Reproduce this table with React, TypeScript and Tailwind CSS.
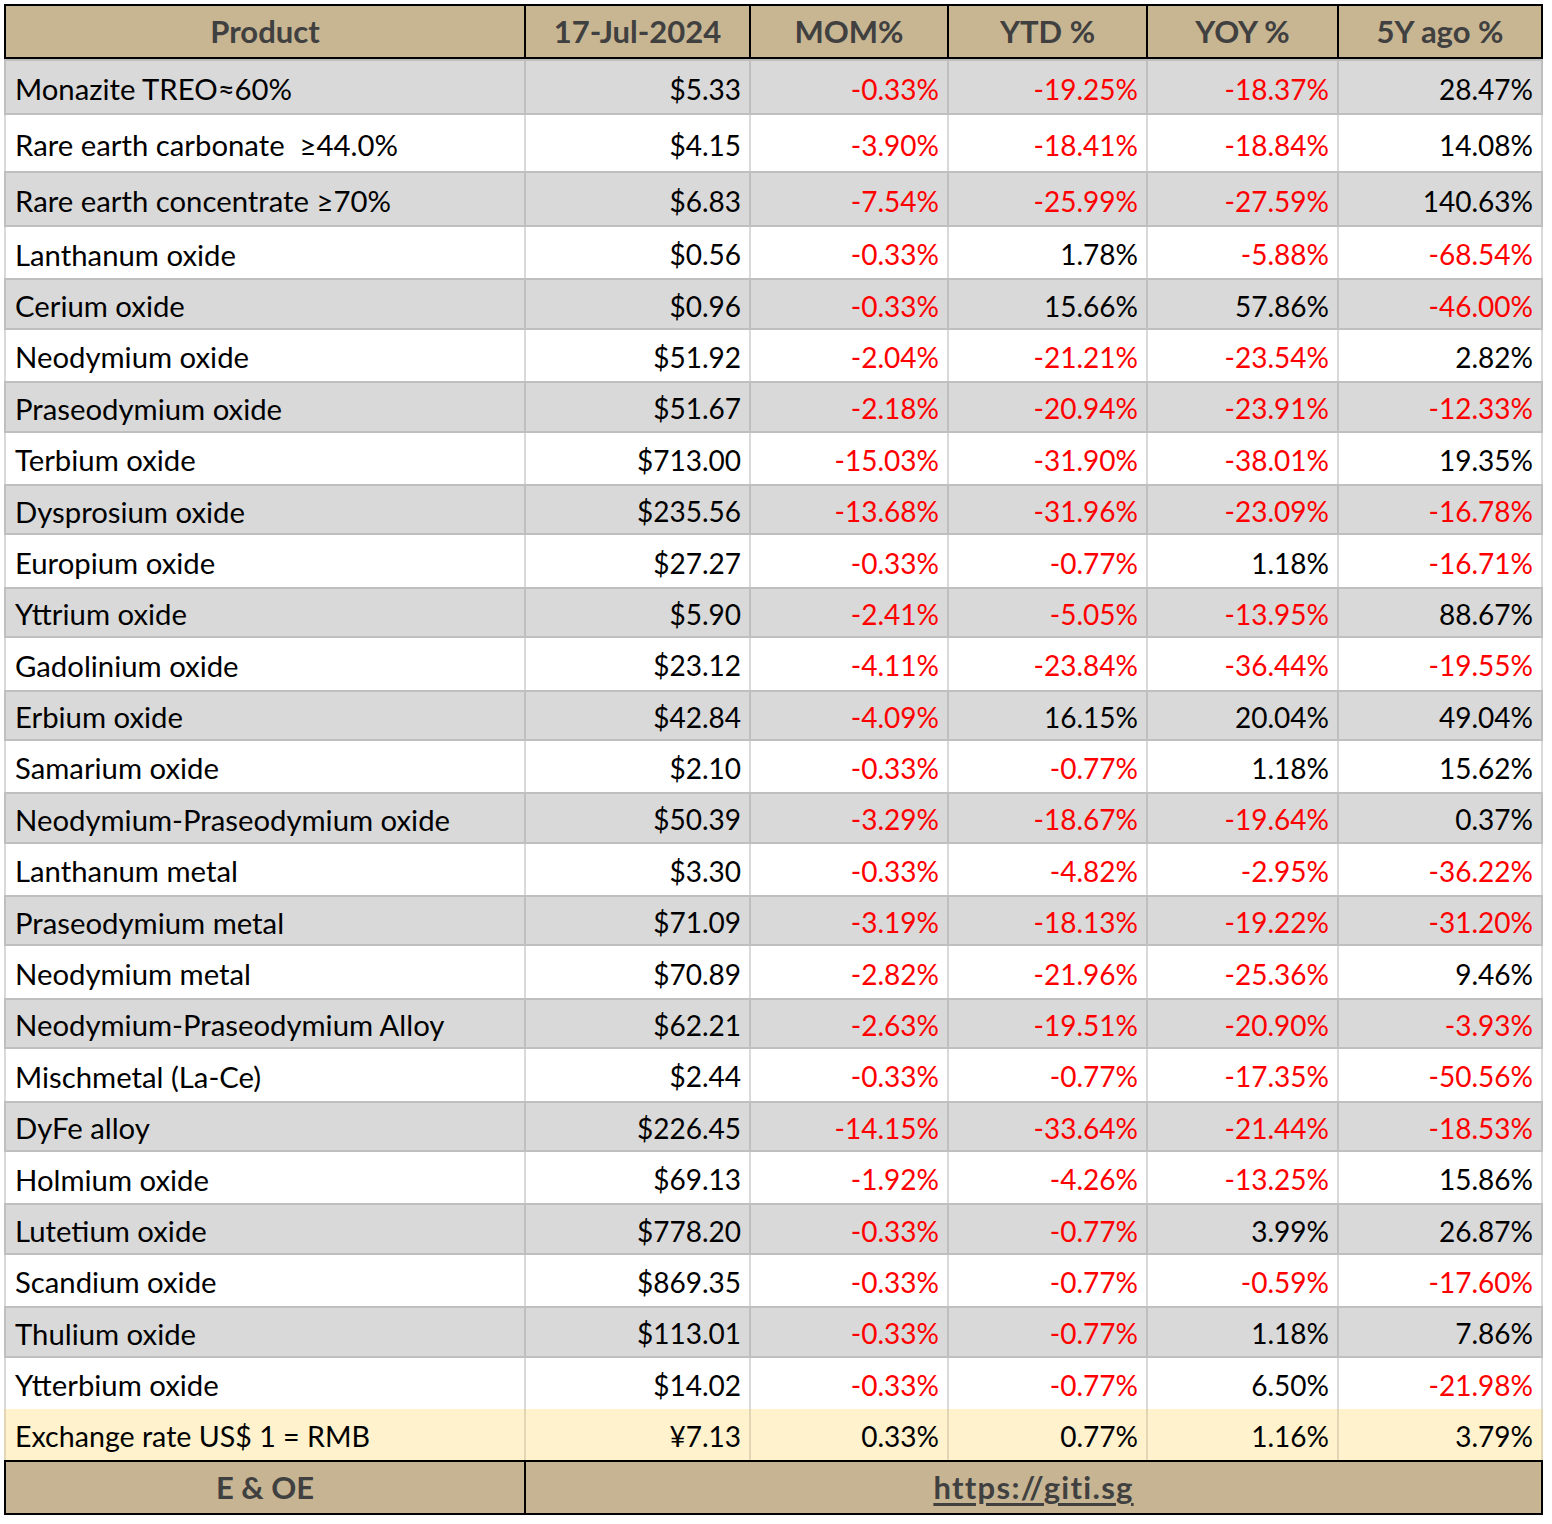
import React from "react";

type Row = [string, string, string, string, string, string];

const rows: Row[] = [
  ["Monazite TREO≈60%", "$5.33", "-0.33%", "-19.25%", "-18.37%", "28.47%"],
  ["Rare earth carbonate  ≥44.0%", "$4.15", "-3.90%", "-18.41%", "-18.84%", "14.08%"],
  ["Rare earth concentrate ≥70%", "$6.83", "-7.54%", "-25.99%", "-27.59%", "140.63%"],
  ["Lanthanum oxide", "$0.56", "-0.33%", "1.78%", "-5.88%", "-68.54%"],
  ["Cerium oxide", "$0.96", "-0.33%", "15.66%", "57.86%", "-46.00%"],
  ["Neodymium oxide", "$51.92", "-2.04%", "-21.21%", "-23.54%", "2.82%"],
  ["Praseodymium oxide", "$51.67", "-2.18%", "-20.94%", "-23.91%", "-12.33%"],
  ["Terbium oxide", "$713.00", "-15.03%", "-31.90%", "-38.01%", "19.35%"],
  ["Dysprosium oxide", "$235.56", "-13.68%", "-31.96%", "-23.09%", "-16.78%"],
  ["Europium oxide", "$27.27", "-0.33%", "-0.77%", "1.18%", "-16.71%"],
  ["Yttrium oxide", "$5.90", "-2.41%", "-5.05%", "-13.95%", "88.67%"],
  ["Gadolinium oxide", "$23.12", "-4.11%", "-23.84%", "-36.44%", "-19.55%"],
  ["Erbium oxide", "$42.84", "-4.09%", "16.15%", "20.04%", "49.04%"],
  ["Samarium oxide", "$2.10", "-0.33%", "-0.77%", "1.18%", "15.62%"],
  ["Neodymium-Praseodymium oxide", "$50.39", "-3.29%", "-18.67%", "-19.64%", "0.37%"],
  ["Lanthanum metal", "$3.30", "-0.33%", "-4.82%", "-2.95%", "-36.22%"],
  ["Praseodymium metal", "$71.09", "-3.19%", "-18.13%", "-19.22%", "-31.20%"],
  ["Neodymium metal", "$70.89", "-2.82%", "-21.96%", "-25.36%", "9.46%"],
  ["Neodymium-Praseodymium Alloy", "$62.21", "-2.63%", "-19.51%", "-20.90%", "-3.93%"],
  ["Mischmetal (La-Ce)", "$2.44", "-0.33%", "-0.77%", "-17.35%", "-50.56%"],
  ["DyFe alloy", "$226.45", "-14.15%", "-33.64%", "-21.44%", "-18.53%"],
  ["Holmium oxide", "$69.13", "-1.92%", "-4.26%", "-13.25%", "15.86%"],
  ["Lutetium oxide", "$778.20", "-0.33%", "-0.77%", "3.99%", "26.87%"],
  ["Scandium oxide", "$869.35", "-0.33%", "-0.77%", "-0.59%", "-17.60%"],
  ["Thulium oxide", "$113.01", "-0.33%", "-0.77%", "1.18%", "7.86%"],
  ["Ytterbium oxide", "$14.02", "-0.33%", "-0.77%", "6.50%", "-21.98%"],
];

const widths = ["w-[522px]", "w-[225px]", "w-[198px]", "w-[199px]", "w-[191px]", "w-[204px]"];
const headers = ["Product", "17-Jul-2024", "MOM%", "YTD %", "YOY %", "5Y ago %"];

function DataRow({ r, i }: { r: Row; i: number }) {
  const gray = i % 2 === 0;
  const h = i < 3 ? "h-[56px]" : "h-[51.4px]";
  const bg = gray ? "bg-[#d9d9d9] border-y-2 border-[#bfbfbf]" : "bg-white";
  const vb = gray ? "border-[#bfbfbf]" : "border-[#d9d9d9]";
  return (
    <div className={`flex w-[1539px] ${h} ${bg}`}>
      {r.map((c, j) => {
        const red = j > 0 && c.startsWith("-");
        return (
          <div
            key={j}
            className={`${widths[j]} shrink-0 flex items-center pt-[3px] border-r-2 ${vb} ${j === 0 ? "border-l-2 pl-[9px] justify-start text-[29.3px]" : "justify-end pr-[8px]"} ${red ? "text-[#ff0000]" : "text-black"} whitespace-pre`}
          >
            {c}
          </div>
        );
      })}
    </div>
  );
}

export default function App() {
  return (
    <div className="w-[1552px] h-[1524px] bg-white pt-[4px] pl-[4px]" style={{ fontFamily: "Lato, 'Open Sans', sans-serif" }}>
      <div className="w-[1539px] text-[28px] leading-none">
        <div className="flex w-[1539px] h-[55px] bg-[#c8b692] border-y-2 border-black font-bold text-[#404040] text-[31px]">
          {headers.map((hd, j) => (
            <div key={j} className={`${widths[j]} shrink-0 flex items-center justify-center border-r-2 border-black ${j === 0 ? "border-l-2" : ""}`}>
              {hd}
            </div>
          ))}
        </div>
        {rows.map((r, i) => (
          <DataRow key={i} r={r} i={i} />
        ))}
        <div className="flex w-[1539px] h-[51.4px] bg-[#fff2cc]">
          {["Exchange rate US$ 1 = RMB", "¥7.13", "0.33%", "0.77%", "1.16%", "3.79%"].map((c, j) => (
            <div key={j} className={`${widths[j]} shrink-0 flex items-center pt-[3px] border-r-2 border-[#e2d6b4] ${j === 0 ? "border-l-2 pl-[9px] text-[28.6px]" : "justify-end pr-[8px]"} text-black`}>
              {c}
            </div>
          ))}
        </div>
        <div className="flex w-[1539px] h-[55px] bg-[#c6b492] border-y-2 border-black font-bold text-[#404040] text-[31px]">
          <div className="w-[522px] shrink-0 flex items-center justify-center border-x-2 border-black">E &amp; OE</div>
          <div className="w-[1017px] shrink-0 flex items-center justify-center border-r-2 border-black">
            <span className="underline decoration-[3px] underline-offset-4 tracking-[1.3px]">https://giti.sg</span>
          </div>
        </div>
      </div>
    </div>
  );
}
